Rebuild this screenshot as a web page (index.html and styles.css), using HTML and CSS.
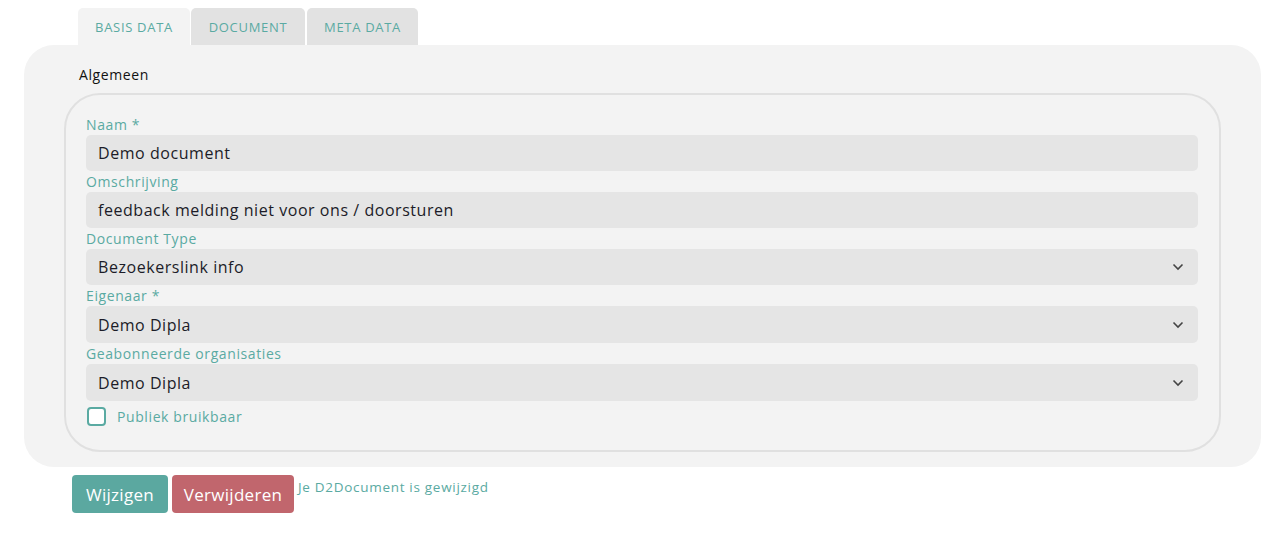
FILE: index.html
```html
<!DOCTYPE html>
<html>
<head>
<meta charset="utf-8">
<link rel="stylesheet" href="styles.css">
</head>
<body>
<div class="page">
  <div class="tabs">
    <div class="tab tab-active">BASIS DATA</div>
    <div class="tab tab-1">DOCUMENT</div>
    <div class="tab tab-2">META DATA</div>
  </div>
  <div class="panel">
    <div class="legend">Algemeen</div>
    <div class="fieldset">
      <div class="label">Naam *</div>
      <div class="input">Demo document</div>
      <div class="label">Omschrijving</div>
      <div class="input">feedback melding niet voor ons / doorsturen</div>
      <div class="label">Document Type</div>
      <div class="input select">Bezoekerslink info<svg class="chev" viewBox="0 0 12 8" width="12" height="8"><path d="M1.5 1.5 L6 6 L10.5 1.5" fill="none" stroke="#444" stroke-width="1.6"/></svg></div>
      <div class="label">Eigenaar *</div>
      <div class="input select tall">Demo Dipla<svg class="chev" viewBox="0 0 12 8" width="12" height="8"><path d="M1.5 1.5 L6 6 L10.5 1.5" fill="none" stroke="#444" stroke-width="1.6"/></svg></div>
      <div class="label">Geabonneerde organisaties</div>
      <div class="input select tall">Demo Dipla<svg class="chev" viewBox="0 0 12 8" width="12" height="8"><path d="M1.5 1.5 L6 6 L10.5 1.5" fill="none" stroke="#444" stroke-width="1.6"/></svg></div>
      <div class="check-row">
        <span class="checkbox"></span>
        <span class="check-label">Publiek bruikbaar</span>
      </div>
    </div>
  </div>
  <div class="actions">
    <button class="btn btn-edit">Wijzigen</button>
    <button class="btn btn-delete">Verwijderen</button>
    <span class="message">Je D2Document is gewijzigd</span>
  </div>
</div>
</body>
</html>
```
FILE: styles.css
```css
html, body {
  margin: 0;
  padding: 0;
  background: #ffffff;
  font-family: "Open Sans", "DejaVu Sans", sans-serif;
}

.page {
  padding: 8px 18px 0 24px;
}

.tabs {
  display: flex;
  margin-left: 54px;
  gap: 1px;
}

.tab {
  height: 37px;
  display: flex;
  align-items: center;
  justify-content: center;
  font-size: 13px;
  letter-spacing: 0.7px;
  color: #5aaaa2;
  background: #e2e2e2;
  border-radius: 5px 5px 0 0;
}

.tab-active {
  width: 112px;
  background: #f3f3f3;
}

.tab-1 {
  width: 114px;
}

.tab-2 {
  width: 111px;
  margin-left: 1px;
}

.panel {
  background: #f3f3f3;
  border-radius: 30px;
  padding: 21px 40px 15px 40px;
}

.legend {
  font-size: 14px;
  letter-spacing: 0.6px;
  color: #111;
  line-height: 18px;
  margin-left: 15px;
  margin-bottom: 9px;
}

.fieldset {
  border: 2px solid #e0e0e0;
  border-radius: 36px;
  padding: 20px 21px 24px 20px;
}

.label {
  font-size: 14px;
  letter-spacing: 0.6px;
  color: #5aaaa2;
  line-height: 20px;
}

.input {
  height: 36px;
  background: #e5e5e5;
  border-radius: 5px;
  display: flex;
  align-items: center;
  padding: 0 12px;
  font-size: 16px;
  letter-spacing: 0.55px;
  color: #1c1c28;
  margin-bottom: 1px;
}

.select {
  justify-content: space-between;
  padding-right: 14px;
}

.tall {
  height: 37px;
}

.chev {
  display: block;
}

.check-row {
  display: flex;
  align-items: center;
  gap: 11px;
  margin-top: 6px;
  margin-left: 1px;
}

.checkbox {
  width: 15px;
  height: 15px;
  border: 2px solid #5aaaa2;
  border-radius: 4px;
  background: #fff;
}

.check-label {
  font-size: 14px;
  letter-spacing: 0.6px;
  color: #5aaaa2;
}

.actions {
  display: flex;
  align-items: flex-start;
  gap: 4px;
  margin-left: 48px;
  margin-top: 8px;
}

.btn {
  height: 38px;
  border: 0;
  border-radius: 4px;
  color: #fff;
  font-family: inherit;
  font-size: 17px;
  letter-spacing: 0.3px;
  padding: 0 10px;
}

.btn-edit {
  width: 96px;
  background: #5ba8a0;
}

.btn-delete {
  width: 122px;
  background: #c1666d;
}

.message {
  font-size: 13.5px;
  letter-spacing: 0.7px;
  color: #5aaaa2;
  padding-top: 3px;
}
```
